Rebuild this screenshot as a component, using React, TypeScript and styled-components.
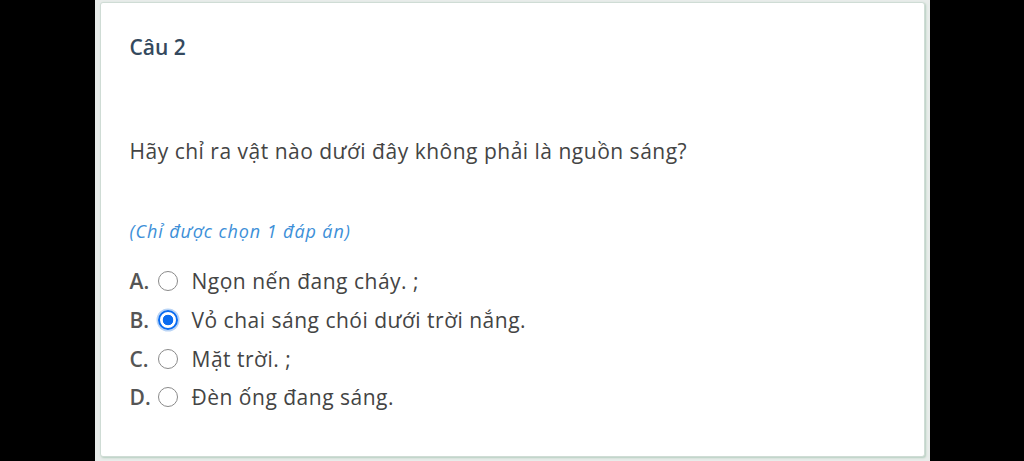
import React, { useState } from "react";
import styled, { createGlobalStyle } from "styled-components";

const GlobalStyle = createGlobalStyle`
  html, body {
    margin: 0;
    padding: 0;
    background: #000;
  }
  body {
    font-family: "Open Sans", "Noto Sans", sans-serif;
  }
`;

const Stage = styled.div`
  width: 1024px;
  height: 461px;
  display: flex;
  justify-content: center;
  background: #000;
  overflow: hidden;
`;

const Frame = styled.div`
  width: 825px;
  padding: 2px 5px 0;
  background: #e8ecea;
`;

const Card = styled.div`
  height: 455px;
  box-sizing: border-box;
  background: #fff;
  border: 1px solid #cfdcd5;
  border-radius: 3px;
  box-shadow: 1px 1px 2px rgba(120, 170, 140, 0.45);
  padding: 29px 29px 0;
`;

const Title = styled.div`
  font-size: 21px;
  font-weight: 600;
  color: #34495e;
  line-height: 30px;
`;

const Question = styled.div`
  margin-top: 75px;
  font-size: 21px;
  letter-spacing: 0.5px;
  color: #444;
  line-height: 28px;
`;

const Note = styled.div`
  margin-top: 54px;
  font-size: 18px;
  letter-spacing: 0.9px;
  font-style: italic;
  color: #3d8fd8;
  line-height: 24px;
`;

const Options = styled.div`
  margin-top: 19px;
  display: flex;
  flex-direction: column;
`;

const Option = styled.label`
  display: flex;
  align-items: center;
  height: 38.7px;
  cursor: pointer;
`;

const Letter = styled.span`
  width: 22px;
  font-size: 21px;
  font-weight: 600;
  color: #555;
`;

const Radio = styled.span<{ $checked: boolean }>`
  width: 20px;
  height: 20px;
  box-sizing: border-box;
  border-radius: 50%;
  margin: 0 14px 0 6px;
  border: ${(p) => (p.$checked ? "2px solid #0a6cf0" : "1px solid #8a8a8a")};
  background: ${(p) =>
    p.$checked
      ? "radial-gradient(circle, #0a6cf0 0 5px, #fff 5.6px)"
      : "#fff"};
  box-shadow: ${(p) => (p.$checked ? "0 0 0 1.5px #b9d4f5" : "none")};
`;

const OptionText = styled.span`
  font-size: 21px;
  letter-spacing: 0.5px;
  color: #444;
`;

const answers = [
  { key: "A", text: "Ngọn nến đang cháy. ;" },
  { key: "B", text: "Vỏ chai sáng chói dưới trời nắng." },
  { key: "C", text: "Mặt trời. ;" },
  { key: "D", text: "Đèn ống đang sáng." },
];

export default function App() {
  const [picked, setPicked] = useState("B");

  return (
    <Stage>
      <GlobalStyle />
      <Frame>
        <Card>
          <Title>Câu 2</Title>
          <Question>Hãy chỉ ra vật nào dưới đây không phải là nguồn sáng?</Question>
          <Note>(Chỉ được chọn 1 đáp án)</Note>
          <Options>
            {answers.map((a) => (
              <Option key={a.key} onClick={() => setPicked(a.key)}>
                <Letter>{a.key}.</Letter>
                <Radio $checked={picked === a.key} />
                <OptionText>{a.text}</OptionText>
              </Option>
            ))}
          </Options>
        </Card>
      </Frame>
    </Stage>
  );
}
